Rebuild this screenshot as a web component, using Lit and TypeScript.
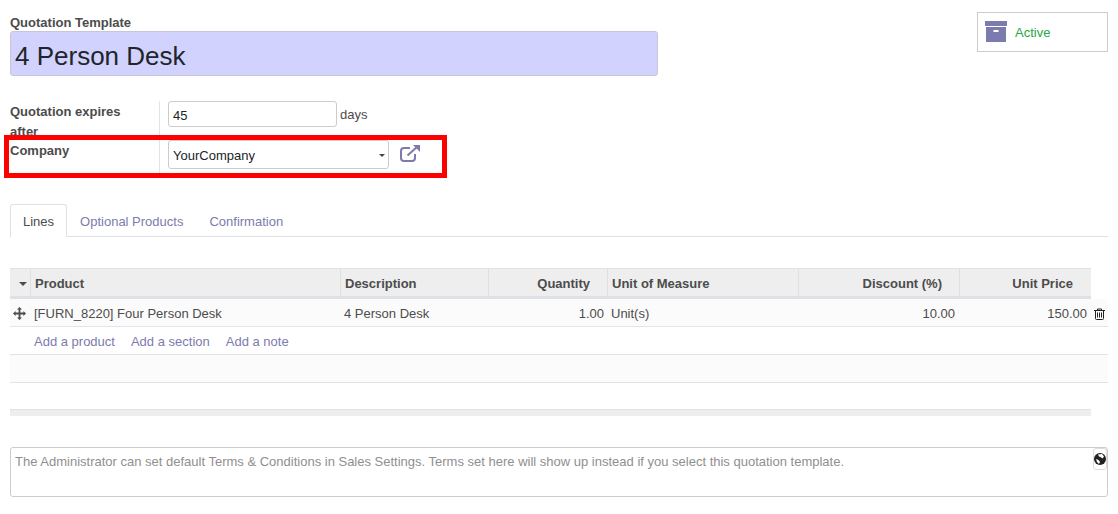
import { LitElement, css, html } from 'lit';
import { customElement } from 'lit/decorators.js';

const COLUMNS = '20px 310px 148px 119px 191px 161px 132px';

@customElement('app-root')
export class AppRoot extends LitElement {
  static styles = css`
    :host {
      display: block;
      height: 514px;
      overflow: hidden;
      background: #fff;
      color: #4c4c4c;
      font-family: 'Liberation Sans', Arial, sans-serif;
      font-size: 13px;
    }

    .sheet {
      position: relative;
      padding: 14px 10px 0;
      height: 500px;
    }

    .top {
      display: flex;
      justify-content: space-between;
      align-items: flex-start;
    }

    .title-block {
      width: 648px;
    }

    .title-label {
      font-weight: bold;
      line-height: 17px;
    }

    .title-input {
      height: 43px;
      line-height: 48px;
      padding-left: 4px;
      background: #d2d2ff;
      border: 1px solid #c6c6d6;
      border-radius: 3px;
      font-size: 26px;
      color: #212529;
    }

    .active {
      display: flex;
      align-items: center;
      gap: 7px;
      width: 122px;
      height: 38px;
      margin-top: -2px;
      padding-left: 7px;
      border: 1px solid #ccc;
      color: #28a745;
    }

    .form {
      display: grid;
      grid-template-columns: 149px 1fr;
      grid-template-rows: 39px 38px;
      margin-top: 25px;
    }

    .form-label {
      height: 20px;
      margin-top: 1px;
      padding-right: 10px;
      font-weight: bold;
      line-height: 20px;
    }

    .form-value {
      display: flex;
      align-items: flex-start;
      border-left: 1px solid #e4e4e4;
      padding-left: 8px;
    }

    .number,
    .select {
      box-sizing: border-box;
      border: 1px solid #ccc;
      border-radius: 3px;
      padding-left: 4px;
      color: #212529;
    }

    .number {
      width: 169px;
      height: 26px;
      line-height: 27px;
    }

    .unit {
      margin-left: 3px;
      line-height: 27px;
    }

    .select {
      position: relative;
      display: block;
      width: 221px;
      height: 29px;
      line-height: 29px;
    }

    .caret {
      position: absolute;
      top: 13px;
      right: 3px;
      border-top: 3px solid #444;
      border-left: 3px solid transparent;
      border-right: 3px solid transparent;
    }

    .external {
      margin: 4px 0 0 11px;
    }

    .highlight {
      position: absolute;
      left: 4px;
      top: 135px;
      box-sizing: border-box;
      width: 443px;
      height: 43px;
      border: 5px solid #ff0000;
      pointer-events: none;
    }

    .tabs {
      display: flex;
      height: 32px;
      margin-top: 26px;
      border-bottom: 1px solid #dee2e6;
    }

    .tab {
      padding: 0 13px;
      line-height: 35px;
      color: #7c7bad;
      white-space: nowrap;
    }

    .tab.on {
      height: 33px;
      box-sizing: border-box;
      background: #fff;
      border: 1px solid #dee2e6;
      border-bottom: none;
      border-radius: 3px 3px 0 0;
      padding: 0 12px;
      color: #4c4c4c;
      line-height: 33px;
    }

    .table {
      margin-top: 31px;
    }

    .head {
      display: grid;
      height: 27px;
      width: 1081px;
      background: #eeeeee;
      border-top: 1px solid #dee2e6;
      border-bottom: 3px solid #dee2e6;
      font-weight: bold;
      line-height: 29px;
    }

    .head > div {
      padding: 0 4px;
      border-left: 1px solid #dfdfdf;
      white-space: nowrap;
      box-sizing: border-box;
    }

    .head > div:first-child {
      position: relative;
      border-left: none;
    }

    .head .right {
      text-align: right;
      padding-right: 18px;
    }

    .head .right.tight {
      padding-right: 17px;
    }

    .head-caret {
      position: absolute;
      left: 9px;
      top: 13px;
      border-top: 4px solid #4c4c4c;
      border-left: 4px solid transparent;
      border-right: 4px solid transparent;
    }

    .row {
      position: relative;
      display: grid;
      height: 27px;
      line-height: 30px;
      background: #fbfbfb;
      border-bottom: 1px solid #e4e2ec;
    }

    .row > div {
      padding: 0 4px;
      box-sizing: border-box;
      white-space: nowrap;
    }

    .row .num {
      text-align: right;
    }

    .row .num.quantity {
      padding-right: 3px;
    }

    .row .handle {
      display: flex;
      align-items: center;
      height: 29px;
      padding-left: 3px;
    }

    .trash {
      position: absolute;
      left: 1084px;
      top: 9px;
    }

    .add-row {
      display: flex;
      gap: 16px;
      height: 27px;
      padding-left: 24px;
      border-bottom: 1px solid #e2e2e8;
      line-height: 30px;
      color: #7c7bad;
    }

    .empty {
      height: 27px;
      background: #fbfbfb;
      border-bottom: 1px solid #e2e2e8;
    }

    .spacer {
      height: 26px;
    }

    .foot {
      width: 1081px;
      height: 6px;
      background: #eeeeee;
      border-top: 1px solid #e2e2e2;
    }

    .terms {
      position: relative;
      box-sizing: border-box;
      height: 50px;
      margin-top: 31px;
      padding: 5px 4px;
      border: 1px solid #ccc;
      border-radius: 3px;
      color: #8f8f8f;
      line-height: 17px;
    }

    .lang {
      position: absolute;
      top: 0;
      right: 0;
      box-sizing: border-box;
      display: flex;
      justify-content: center;
      width: 14px;
      height: 22px;
      padding-top: 4px;
      border: 1px solid #ddd;
      border-radius: 3px;
    }

    svg {
      display: block;
      flex: none;
    }
  `;

  render() {
    const cols = `grid-template-columns:${COLUMNS}`;
    return html`
      <div class="sheet">
        <div class="top">
          <div class="title-block">
            <div class="title-label">Quotation Template</div>
            <div class="title-input">4 Person Desk</div>
          </div>
          <div class="active">
            <svg width="23" height="22" viewBox="0 0 23 22">
              <rect x="0" y="0" width="22" height="5" fill="#7c7bad" />
              <rect x="1" y="6" width="20" height="15" fill="#7c7bad" />
              <rect x="8.5" y="9" width="5" height="2" fill="#fff" />
            </svg>
            <span>Active</span>
          </div>
        </div>

        <div class="form">
          <div class="form-label">Quotation expires after</div>
          <div class="form-value">
            <span class="number">45</span>
            <span class="unit">days</span>
          </div>
          <div class="form-label">Company</div>
          <div class="form-value">
            <span class="select">YourCompany<i class="caret"></i></span>
            <svg class="external" width="21" height="18" viewBox="0 0 21 18" fill="none" stroke="#7c7bad" stroke-width="2">
              <path d="M10 4H4a3 3 0 0 0-3 3v7a3 3 0 0 0 3 3h8a3 3 0 0 0 3-3v-4" />
              <path d="M7.5 11.5 18 2" />
              <path d="M13 1h7v7z" fill="#7c7bad" stroke="none" />
            </svg>
          </div>
        </div>
        <div class="highlight"></div>

        <div class="tabs">
          <div class="tab on">Lines</div>
          <div class="tab">Optional Products</div>
          <div class="tab">Confirmation</div>
        </div>

        <div class="table">
          <div class="head" style=${cols}>
            <div><i class="head-caret"></i></div>
            <div>Product</div>
            <div>Description</div>
            <div class="right tight">Quantity</div>
            <div>Unit of Measure</div>
            <div class="right tight">Discount (%)</div>
            <div class="right">Unit Price</div>
          </div>
          <div class="row" style=${cols}>
            <div class="handle">
              <svg width="13" height="13" viewBox="0 0 13 13" fill="#4c4c4c">
                <path d="M6.5 0 9 2.6H7.4v3H10.4V4L13 6.5 10.4 9V7.4H7.4v3H9L6.5 13 4 10.4h1.6v-3h-3V9L0 6.5 2.6 4v1.6h3v-3H4z" />
              </svg>
            </div>
            <div>[FURN_8220] Four Person Desk</div>
            <div>4 Person Desk</div>
            <div class="num quantity">1.00</div>
            <div>Unit(s)</div>
            <div class="num">10.00</div>
            <div class="num">150.00</div>
            <svg class="trash" width="11" height="12" viewBox="0 0 11 12" fill="none" stroke="#222" stroke-width="1">
              <path d="M0 2.5h11M3.5 2.5V1h4v1.5M1.5 2.5v8a1 1 0 0 0 1 1h6a1 1 0 0 0 1-1v-8" />
              <path d="M3.5 4.5v5M5.5 4.5v5M7.5 4.5v5" />
            </svg>
          </div>
          <div class="add-row">
            <span>Add a product</span>
            <span>Add a section</span>
            <span>Add a note</span>
          </div>
          <div class="empty"></div>
          <div class="spacer"></div>
          <div class="foot"></div>
        </div>

        <div class="terms">
          The Administrator can set default Terms &amp; Conditions in Sales Settings. Terms set here will show up instead if you select this quotation template.
          <div class="lang">
            <svg width="12" height="12" viewBox="0 0 12 12">
              <circle cx="6" cy="6" r="6" fill="#222" />
              <path d="M4 1.5 8 1l2 2.5-1.5 2L6.5 4 5 3.5zM2 6l2.5 1L6 9 5 11 3 9z" fill="#fff" />
            </svg>
          </div>
        </div>
      </div>
    `;
  }
}

declare global {
  interface HTMLElementTagNameMap {
    'app-root': AppRoot;
  }
}
